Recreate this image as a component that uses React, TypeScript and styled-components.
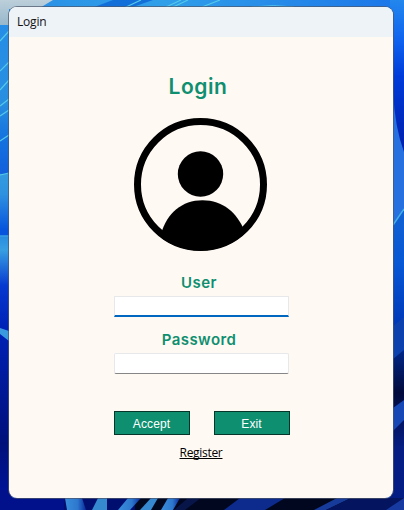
import React from 'react';
import styled, { createGlobalStyle } from 'styled-components';

const GlobalStyle = createGlobalStyle`
  * { box-sizing: border-box; }
  body { margin: 0; overflow: hidden; }
`;

const Desktop = styled.div`
  position: relative;
  width: 404px;
  height: 510px;
  padding: 7px 11px 12px 9px;
  overflow: hidden;
  background: #0a3fc4;
`;

const WallpaperArt = styled.svg`
  position: absolute;
  inset: 0;
`;

const Window = styled.main`
  position: relative;
  display: flex;
  flex-direction: column;
  width: 384px;
  height: 491px;
  border-radius: 8px;
  overflow: hidden;
  background: #fef9f3;
`;

const Frame = styled.div`
  position: relative;
  width: 384px;
  height: 491px;
  border-radius: 8px;
  box-shadow: 0 0 0 1px rgba(75, 85, 105, 0.7);
`;

const TitleBar = styled.header`
  height: 30px;
  flex: none;
  padding-left: 8px;
  font: 12px/30px 'Open Sans', sans-serif;
  letter-spacing: -0.2px;
  color: #111;
  background: #eef3f8;
`;

const Form = styled.form`
  display: flex;
  flex-direction: column;
  align-items: center;
  padding-top: 37px;
`;

const Heading = styled.h1`
  margin: 0 6px 0 0;
  height: 25px;
  font: 600 21px/25px Inter, sans-serif;
  letter-spacing: 0.6px;
  color: #0e8f70;
`;

const Avatar = styled.svg`
  display: block;
  margin-top: 19px;
`;

const Label = styled.label<{ $top: number }>`
  margin: ${(p) => p.$top}px 4px 0 0;
  height: 20px;
  font: 600 15px/20px Inter, sans-serif;
  letter-spacing: 0.45px;
  color: #0e8f70;
`;

const Field = styled.input<{ $active?: boolean }>`
  width: 175px;
  height: 21px;
  margin-top: 3px;
  padding: 0 4px;
  border: 1px solid #e7e8ea;
  border-bottom: ${(p) => (p.$active ? '2px solid #0067c0' : '1px solid #868686')};
  border-radius: ${(p) => (p.$active ? '1px 1px 0 0' : '2px')};
  outline: none;
  background: #fff;
  caret-color: transparent;
`;

const Actions = styled.div`
  display: flex;
  gap: 24px;
  margin: 37px 0 0 2px;
`;

const Button = styled.button`
  width: 76px;
  height: 24px;
  padding: 1px 1px 0 0;
  border: 1px solid #06352a;
  font: 12px/20px 'Liberation Sans', sans-serif;
  letter-spacing: 0.1px;
  color: #fff;
  background: #0e8f70;
`;

const RegisterLink = styled.a`
  margin-top: 9px;
  font: 12px/17px 'Open Sans', sans-serif;
  letter-spacing: -0.3px;
  color: #000;
  text-decoration: underline;
  text-underline-offset: 1px;
  text-decoration-skip-ink: none;
`;

function Wallpaper() {
  return (
    <WallpaperArt width="404" height="510" viewBox="0 0 404 510" aria-hidden="true">
      <defs>
        <linearGradient id="top" x1="0" x2="1" y1="0" y2="0">
          <stop offset="0" stopColor="#278de5" />
          <stop offset=".4" stopColor="#309fe9" />
          <stop offset="1" stopColor="#1b75e9" />
        </linearGradient>
        <linearGradient id="left" gradientUnits="userSpaceOnUse" x1="0" x2="0" y1="0" y2="510">
          <stop offset="0" stopColor="#268de9" />
          <stop offset=".2" stopColor="#288fe0" />
          <stop offset=".27" stopColor="#1673df" />
          <stop offset=".34" stopColor="#1160dc" />
          <stop offset=".342" stopColor="#339be0" />
          <stop offset=".38" stopColor="#2f92e0" />
          <stop offset=".45" stopColor="#0755dd" />
          <stop offset=".463" stopColor="#0755dd" />
          <stop offset=".465" stopColor="#2a8ee0" />
          <stop offset=".49" stopColor="#389fe2" />
          <stop offset=".56" stopColor="#0639d0" />
          <stop offset=".64" stopColor="#0022b7" />
          <stop offset=".87" stopColor="#00107b" />
          <stop offset="1" stopColor="#0016a0" />
        </linearGradient>
        <linearGradient id="right" x1="0" x2="0" y1="0" y2="1">
          <stop offset="0" stopColor="#2387ed" />
          <stop offset=".08" stopColor="#0e62ee" />
          <stop offset=".15" stopColor="#003bd9" />
          <stop offset=".29" stopColor="#0020ad" />
          <stop offset=".42" stopColor="#1261d2" />
          <stop offset=".52" stopColor="#0756d4" />
          <stop offset=".63" stopColor="#003aba" />
          <stop offset=".77" stopColor="#020a3c" />
          <stop offset=".88" stopColor="#061e84" />
          <stop offset="1" stopColor="#021c84" />
        </linearGradient>
        <linearGradient id="pale" x1="0" x2="0" y1="0" y2="1">
          <stop offset="0" stopColor="#bccfda" />
          <stop offset="1" stopColor="#97b7cb" />
        </linearGradient>
        <linearGradient id="petal" x1="0" x2="1" y1="0" y2="0">
          <stop offset="0" stopColor="#398ddc" />
          <stop offset=".6" stopColor="#2d78cd" />
          <stop offset="1" stopColor="#09289b" />
        </linearGradient>
      </defs>
      <rect width="404" height="12" fill="url(#top)" />
      <rect y="12" width="12" height="498" fill="url(#left)" />
      <rect x="390" width="14" height="510" fill="url(#right)" />
      <path d="M0 0H53L38 9H9V25H0Z" fill="url(#pale)" />
      <path d="M89 9L113 0H153L127 9Z" fill="#126fd9" />
      <g fill="none" stroke="#54c8e8" strokeWidth="1.2">
        <path d="M124 8L141 0M164 8L181 0M171 8L188 0M202 7L220 0" />
        <path d="M252 7Q274 4 294 7" strokeWidth=".8" />
        <path d="M0 41L9 31M0 71L9 62M0 90L9 80M0 106L9 99M0 116L9 110M0 141L9 135M0 175L9 173M0 236H9" />
      </g>
      <path d="M0 328L9 331V341L0 334Z" fill="#3b99df" />
      <path d="M393 92Q395 128 404 152V209L393 225Z" fill="#2670df" />
      <path d="M393 225L404 209" stroke="#43afe4" strokeWidth="1.5" />
      <path d="M393 326L404 317V350L393 359Z" fill="#0c41ae" />
      <path d="M393 408L404 400V420L393 431Z" fill="#1747b5" />
      <path d="M64 498H135V510H64Z" fill="#000e70" />
      <path d="M135 498H386V510H135Z" fill="#00071f" />
      <path d="M65 498H82L86 510H67Z" fill="url(#petal)" />
      <path d="M98 498H107V510H92Z" fill="#3589cf" />
      <path d="M128 498H141L130 510H118Z" fill="url(#petal)" />
      <path d="M151 498H158L151 510H140Z" fill="#3689d0" />
      <path d="M168 498H180L173 510H161Z" fill="url(#petal)" />
      <path d="M188 498H201L185 510H174Z" fill="#071548" />
      <path d="M240 498H285L265 510H224Z" fill="#0c2b8d" />
      <path d="M337 498H351L326 510H314Z" fill="#173b9b" />
      <path d="M351 498H404V510H326Z" fill="#05145e" />
      <path d="M386 510L404 498V510Z" fill="#173aa0" />
      <path d="M0 490H12V498H64V510H0Z" fill="#00118b" />
    </WallpaperArt>
  );
}

export default function App() {
  return (
    <Desktop>
      <GlobalStyle />
      <Wallpaper />
      <Frame>
        <Window>
          <TitleBar>Login</TitleBar>
          <Form onSubmit={(e) => e.preventDefault()}>
            <Heading>Login</Heading>
            <Avatar width="134" height="134" viewBox="0 0 134 134" aria-hidden="true">
              <defs>
                <clipPath id="badge"><circle cx="66.5" cy="66.5" r="66" /></clipPath>
              </defs>
              <circle cx="66.5" cy="66.5" r="63" fill="none" stroke="#000" strokeWidth="7" />
              <circle cx="66.5" cy="56" r="22.7" />
              <path d="M27 116C33 95 48 82.3 68.5 82.3S103 95 110 112V134H27Z" clipPath="url(#badge)" />
            </Avatar>
            <Label htmlFor="user" $top={21}>User</Label>
            <Field id="user" $active />
            <Label htmlFor="password" $top={13}>Password</Label>
            <Field id="password" type="password" />
            <Actions>
              <Button type="submit">Accept</Button>
              <Button type="button">Exit</Button>
            </Actions>
            <RegisterLink>Register</RegisterLink>
          </Form>
        </Window>
      </Frame>
    </Desktop>
  );
}
